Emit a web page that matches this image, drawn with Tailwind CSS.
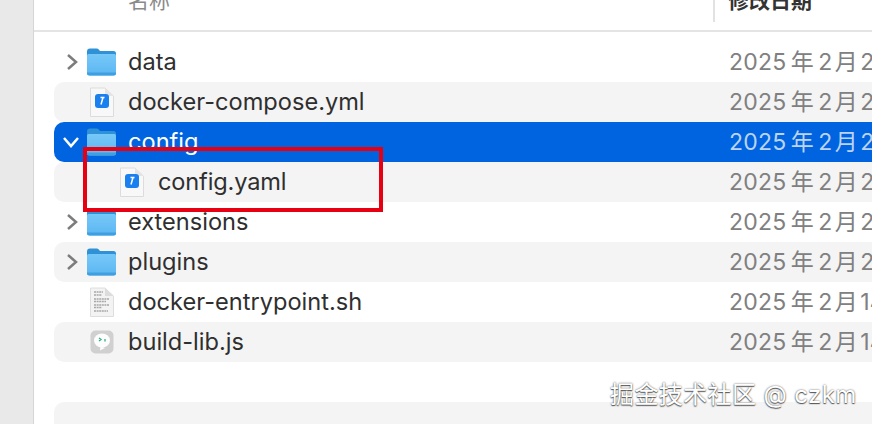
<!DOCTYPE html>
<html lang="zh">
<head>
    <meta charset="UTF-8">
    <title>访达</title>
    <script src="https://cdn.jsdelivr.net/npm/@tailwindcss/browser@4"></script>
</head>
<body class="w-[872px] h-[424px] overflow-hidden bg-white font-['Inter','Noto_Sans_CJK_SC',sans-serif] text-[#2f2f2f]">

    <!-- Icons -->
    <svg class="absolute w-0 h-0">
        <defs>
            <linearGradient id="folderFront" x1="0" y1="0" x2="0" y2="1">
                <stop offset="0" stop-color="#76c8f8"/>
                <stop offset="1" stop-color="#5cb6f2"/>
            </linearGradient>
        </defs>
        <symbol id="folder" viewBox="0 0 29 28">
            <path d="M0 3.5Q0 .5 3 .5H9.500Q11 .5 12 1.800L13 3H26.500Q29 3 29 5.500V12H0Z" fill="#2f92d6"/>
            <path d="M0 7.500Q0 6 1.500 6H27.500Q29 6 29 7.500V25Q29 27.500 26.500 27.500H2.500Q0 27.500 0 25Z" fill="url(#folderFront)"/>
            <path d="M0 25Q0 27.500 2.500 27.500H26.500Q29 27.500 29 25V24.500H0Z" fill="#3f9fe0"/>
        </symbol>
        <symbol id="yaml" viewBox="0 0 24 30">
            <path d="M.5 1H15L23.500 9V29.500H.5Z" fill="#f8f8f8" stroke="#dcdcdc"/>
            <path d="M15 1V9H23.500Z" fill="#e4e4e4"/>
            <rect x="5" y="7" width="14" height="14" rx="3" fill="#1a80f0"/>
            <path d="M10.500 10.500H14.500M13 10.500L11 17.500" stroke="#fff" stroke-width="1.500" fill="none"/>
        </symbol>
        <symbol id="script" viewBox="0 0 24 30">
            <path d="M.5 1H15L23.500 9V29.500H.5Z" fill="#f3f3f3" stroke="#dedede"/>
            <path d="M15 1V9H23.500Z" fill="#dcdcdc"/>
            <path d="M4 5H13M4 8H12M4 12H19M4 14.500H16M4 18H19M4 20.500H12M4 24H18" stroke="#a8a8a8" stroke-width="1.300" stroke-dasharray="2 .6"/>
        </symbol>
        <symbol id="node" viewBox="0 0 24 24">
            <rect x=".5" y=".5" width="23" height="23" rx="5" fill="#d0d0d0"/>
            <ellipse cx="12" cy="10.500" rx="8" ry="7" fill="#fdfdfd"/>
            <path d="M15 18L10 20.500L10.500 16Z" fill="#fdfdfd"/>
            <path d="M9 8L11 9.500L9 11M15 9V11.500" stroke="#2fae84" stroke-width="1.300" fill="none"/>
        </symbol>
    </svg>

    <div class="flex h-full">
        <!-- Sidebar edge -->
        <aside class="w-[34px] shrink-0 bg-[#e9e9e9] border-r border-[#d6d6d6]"></aside>

        <main class="relative flex-1 min-w-0 overflow-hidden">
            <!-- Column headers -->
            <header class="flex h-[32px] border-b-2 border-[#e4e4e4] text-[21px] leading-[24px] overflow-hidden">
                <div class="w-[679px] pl-[94px] -mt-[11px] text-[#8a8a8a]">名称</div>
                <div class="h-[22px] border-l-2 border-[#e2e2e2]"></div>
                <div class="pl-[13px] -mt-[11px] font-bold text-[#333]">修改日期</div>
            </header>

            <!-- File rows -->
            <div class="ml-[20px] mt-[10px] text-[23.6px]">
                <div class="flex items-center h-[40px]">
                    <svg class="shrink-0 ml-[11px] w-[14px] h-[18px] text-[#7c7c7c]" viewBox="0 0 14 18" fill="none" stroke="currentColor" stroke-width="2.500"><path d="M3 2L11 9L3 16"/></svg>
                    <svg class="shrink-0 ml-[8px] w-[29px] h-[28px]"><use href="#folder"/></svg>
                    <span class="ml-[12px] w-[601px] shrink-0">data</span>
                    <span class="whitespace-nowrap text-[#808080] text-[23px] tracking-[0.2px]">2025&thinsp;年&thinsp;2&hairsp;月&hairsp;20日</span>
                </div>
                <div class="flex items-center h-[40px] bg-[#f4f4f4] rounded-l-[10px]">
                    <svg class="shrink-0 ml-[36px] w-[24px] h-[30px]"><use href="#yaml"/></svg>
                    <span class="ml-[14px] w-[601px] shrink-0">docker-compose.yml</span>
                    <span class="whitespace-nowrap text-[#808080] text-[23px] tracking-[0.2px]">2025&thinsp;年&thinsp;2&hairsp;月&hairsp;20日</span>
                </div>
                <div class="flex items-center h-[40px] bg-[#0064e0] rounded-l-[10px] text-white">
                    <svg class="shrink-0 ml-[8px] w-[18px] h-[14px]" viewBox="0 0 18 14" fill="none" stroke="currentColor" stroke-width="2.500"><path d="M2 3L9 11L16 3"/></svg>
                    <svg class="shrink-0 ml-[7px] w-[29px] h-[28px]"><use href="#folder"/></svg>
                    <span class="ml-[12px] w-[601px] shrink-0">config</span>
                    <span class="whitespace-nowrap text-[#bcd3f2] text-[23px] tracking-[0.2px]">2025&thinsp;年&thinsp;2&hairsp;月&hairsp;20日</span>
                </div>
                <div class="flex items-center h-[40px] bg-[#f4f4f4] rounded-l-[10px]">
                    <svg class="shrink-0 ml-[66px] w-[24px] h-[30px]"><use href="#yaml"/></svg>
                    <span class="ml-[14px] w-[571px] shrink-0 tracking-[-0.15px]">config.yaml</span>
                    <span class="whitespace-nowrap text-[#808080] text-[23px] tracking-[0.2px]">2025&thinsp;年&thinsp;2&hairsp;月&hairsp;20日</span>
                </div>
                <div class="flex items-center h-[40px]">
                    <svg class="shrink-0 ml-[11px] w-[14px] h-[18px] text-[#7c7c7c]" viewBox="0 0 14 18" fill="none" stroke="currentColor" stroke-width="2.500"><path d="M3 2L11 9L3 16"/></svg>
                    <svg class="shrink-0 ml-[8px] w-[29px] h-[28px]"><use href="#folder"/></svg>
                    <span class="ml-[12px] w-[601px] shrink-0">extensions</span>
                    <span class="whitespace-nowrap text-[#808080] text-[23px] tracking-[0.2px]">2025&thinsp;年&thinsp;2&hairsp;月&hairsp;20日</span>
                </div>
                <div class="flex items-center h-[40px] bg-[#f4f4f4] rounded-l-[10px]">
                    <svg class="shrink-0 ml-[11px] w-[14px] h-[18px] text-[#7c7c7c]" viewBox="0 0 14 18" fill="none" stroke="currentColor" stroke-width="2.500"><path d="M3 2L11 9L3 16"/></svg>
                    <svg class="shrink-0 ml-[8px] w-[29px] h-[28px]"><use href="#folder"/></svg>
                    <span class="ml-[12px] w-[601px] shrink-0">plugins</span>
                    <span class="whitespace-nowrap text-[#808080] text-[23px] tracking-[0.2px]">2025&thinsp;年&thinsp;2&hairsp;月&hairsp;20日</span>
                </div>
                <div class="flex items-center h-[40px]">
                    <svg class="shrink-0 ml-[36px] w-[24px] h-[30px]"><use href="#script"/></svg>
                    <span class="ml-[14px] w-[601px] shrink-0">docker-entrypoint.sh</span>
                    <span class="whitespace-nowrap text-[#808080] text-[23px] tracking-[0.2px]">2025&thinsp;年&thinsp;2&hairsp;月&hairsp;14日</span>
                </div>
                <div class="flex items-center h-[40px] bg-[#f4f4f4] rounded-l-[10px]">
                    <svg class="shrink-0 ml-[36px] w-[24px] h-[24px]"><use href="#node"/></svg>
                    <span class="ml-[14px] w-[601px] shrink-0">build-lib.js</span>
                    <span class="whitespace-nowrap text-[#808080] text-[23px] tracking-[0.2px]">2025&thinsp;年&thinsp;2&hairsp;月&hairsp;14日</span>
                </div>
                <div class="h-[40px]"></div>
                <div class="h-[40px] bg-[#f4f4f4] rounded-l-[10px]"></div>
            </div>

            <!-- Red annotation box -->
            <div class="absolute left-[49px] top-[147px] w-[300px] h-[65px] border-4 border-[#e60012]"></div>

            <!-- Watermark -->
            <div class="absolute left-[576px] top-[379px] whitespace-nowrap text-[24px] leading-[32px] tracking-[0.4px] text-white [text-shadow:0_0_2px_#555,0_1px_1px_#555]">掘金技术社区 @ czkm</div>
        </main>
    </div>
</body>
</html>
